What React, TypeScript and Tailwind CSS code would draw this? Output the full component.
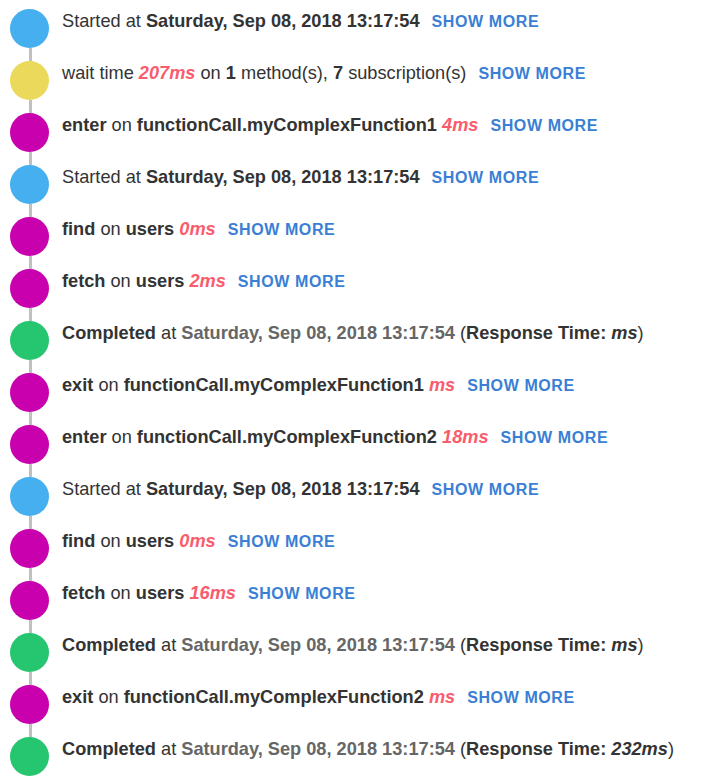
import React from "react";

type Kind = "start" | "wait" | "method" | "done";

type Entry = {
  kind: Kind;
  body: React.ReactNode;
  more?: boolean;
};

const dotColor: Record<Kind, string> = {
  start: "bg-[#46aff0]",
  wait: "bg-[#ebd95b]",
  method: "bg-[#c900ad]",
  done: "bg-[#26c56f]",
};

const DATE = "Saturday, Sep 08, 2018 13:17:54";

function B({ children }: { children: React.ReactNode }) {
  return <span className="font-bold">{children}</span>;
}

function Ms({ children }: { children: React.ReactNode }) {
  return <span className="font-bold italic text-[#f95c6d]">{children}</span>;
}

function started(): Entry {
  return {
    kind: "start",
    more: true,
    body: (
      <>
        Started at <B>{DATE}</B>
      </>
    ),
  };
}

function call(op: string, target: string, ms: string): Entry {
  return {
    kind: "method",
    more: true,
    body: (
      <>
        <B>{op}</B> on <B>{target}</B> <Ms>{ms}</Ms>
      </>
    ),
  };
}

function completed(ms: string): Entry {
  return {
    kind: "done",
    body: (
      <>
        <B>Completed</B> at <span className="font-bold text-[#666]">{DATE}</span> (
        <B>
          Response Time: <span className="italic">{ms}</span>
        </B>
        )
      </>
    ),
  };
}

const entries: Entry[] = [
  started(),
  {
    kind: "wait",
    more: true,
    body: (
      <>
        wait time <Ms>207ms</Ms> on <B>1</B> method(s), <B>7</B> subscription(s)
      </>
    ),
  },
  call("enter", "functionCall.myComplexFunction1", "4ms"),
  started(),
  call("find", "users", "0ms"),
  call("fetch", "users", "2ms"),
  completed("ms"),
  call("exit", "functionCall.myComplexFunction1", "ms"),
  call("enter", "functionCall.myComplexFunction2", "18ms"),
  started(),
  call("find", "users", "0ms"),
  call("fetch", "users", "16ms"),
  completed("ms"),
  call("exit", "functionCall.myComplexFunction2", "ms"),
  completed("232ms"),
];

function TimelineRow({ entry, last }: { entry: Entry; last: boolean }) {
  return (
    <li className="flex">
      <div className="flex flex-col ml-[10px] w-[39px]">
        <div className={`w-[39px] h-[39px] rounded-full ${dotColor[entry.kind]}`} />
        {!last && <div className="ml-[19px] w-[3px] h-[13px] bg-[#c0c0c0]" />}
      </div>
      <div className="ml-[13px] -mt-px text-[18.2px] leading-[27px] text-[#333] whitespace-nowrap">
        {entry.body}
        {entry.more && (
          <button className="ml-3 font-bold text-[16px] tracking-[0.6px] text-[#3a7fd5]">
            SHOW MORE
          </button>
        )}
      </div>
    </li>
  );
}

export default function App() {
  return (
    <div
      className="w-[703px] h-[779px] bg-white pt-[9px] overflow-hidden"
      style={{ fontFamily: '"Liberation Sans", Arial, sans-serif' }}
    >
      <ul>
        {entries.map((e, i) => (
          <TimelineRow key={i} entry={e} last={i === entries.length - 1} />
        ))}
      </ul>
    </div>
  );
}
